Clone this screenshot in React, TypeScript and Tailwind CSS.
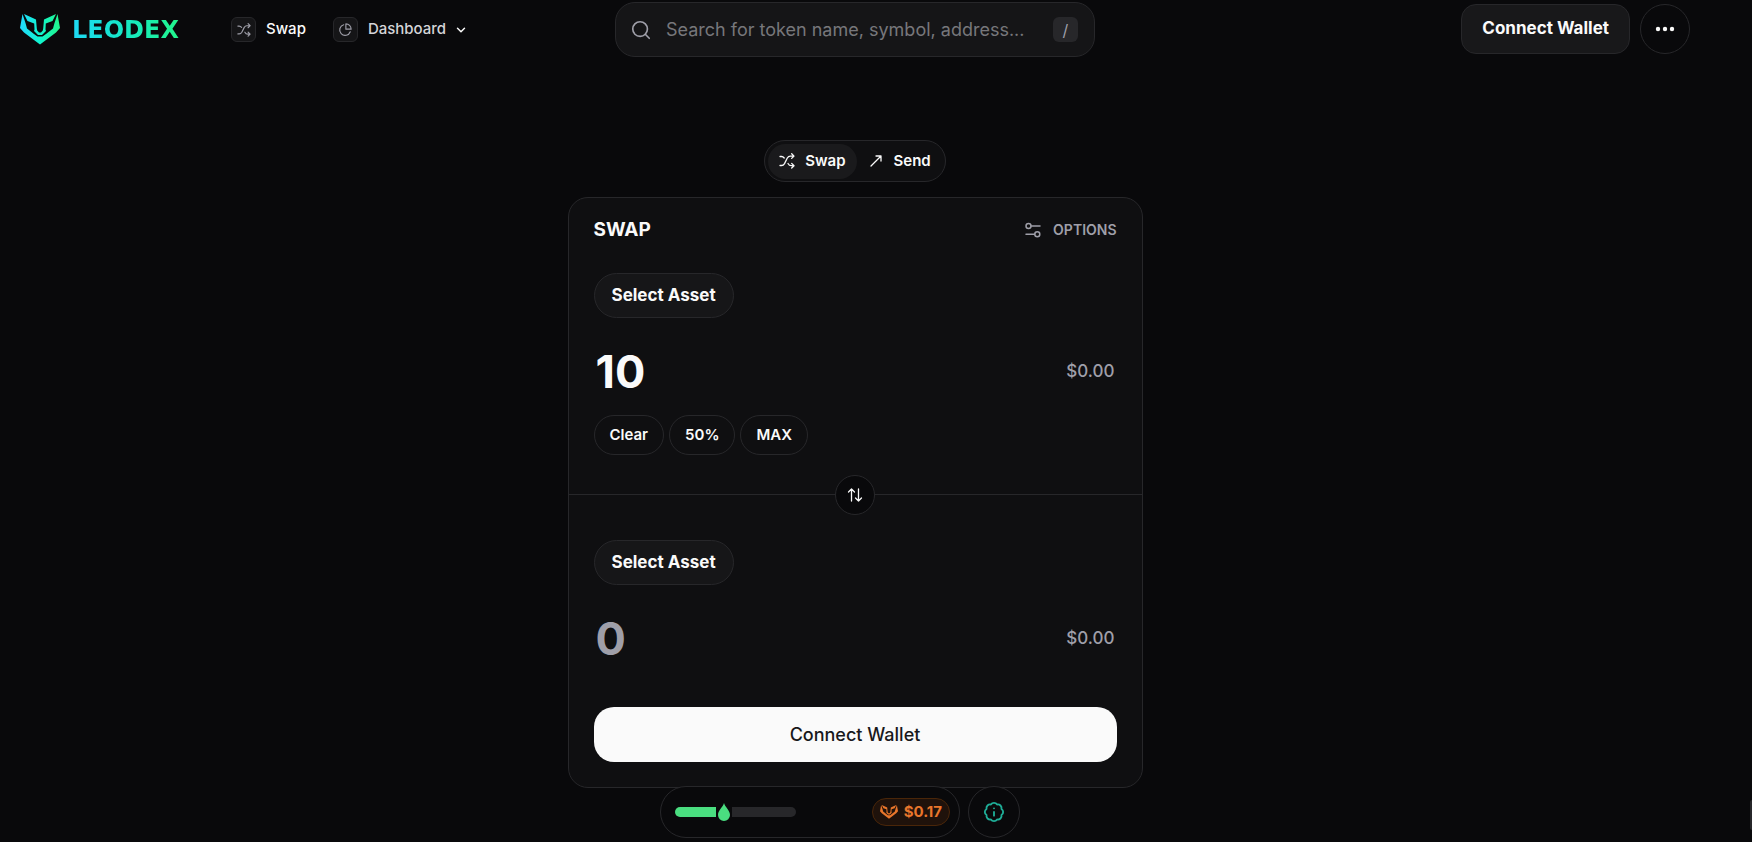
import { useState } from "react";
import type { ReactNode } from "react";
import { BadgeInfo, ChevronDown, Search } from "lucide-react";

const LionIcon = ({ className, fill }: { className?: string; fill: string }) => (
  <svg viewBox="0 0 40 31" className={className} fill={fill} aria-hidden="true">
    <defs>
      <linearGradient id="lion" gradientUnits="userSpaceOnUse" x1="0" y1="0" x2="40" y2="0">
        <stop offset="0" stopColor="#22d8ff" />
        <stop offset="0.5" stopColor="#10f5cf" />
        <stop offset="1" stopColor="#22f58a" />
      </linearGradient>
    </defs>
    <path d="M2.500 0 5.500 9 7 14.500 14 20 17.500 22.500H22.500L26 20 33 14.500 34.500 9 37.500 0 40 14 36 18.500 20 30.500 4 18.500 0 14Z" />
    <path d="M4 0 16 5.500 16.800 14.500 17.200 16.500 19 18.500H21L22.800 16.500 23.200 14.500 24 5.500 36 0 32.500 7 25.800 9.500 25.500 15.500 26 17 22 21H18L14 17 14.500 15.500 14.200 9.500 7.500 7Z" />
  </svg>
);

const ShuffleIcon = ({ className }: { className?: string }) => (
  <svg
    viewBox="0 0 16 16"
    className={className}
    fill="none"
    stroke="currentColor"
    strokeWidth="1.300"
    strokeLinecap="round"
    strokeLinejoin="round"
    aria-hidden="true"
  >
    <path d="M1 3.500h1.500c1.200 0 2 .6 2.700 1.500M1 12.500h1.500c1.400 0 2.300-.7 3-1.900l2.800-5.600c.7-1.200 1.600-1.900 3-1.900H15M9 10.500c.8 1.500 1.700 2.200 3.300 2.200H15M12.700.8 15 3.100l-2.300 2.300M12.700 10.400l2.300 2.300-2.300 2.300" />
  </svg>
);

const PieIcon = () => (
  <svg viewBox="0 0 16 16" className="size-3.5" fill="none" stroke="currentColor" strokeWidth="1.300" strokeLinejoin="round" aria-hidden="true">
    <path d="M6.500 2A6.200 6.200 0 1 0 14 10" strokeLinecap="round" />
    <path d="M9 1v6h6a6 6 0 0 0-6-6Z" />
  </svg>
);

const SendIcon = () => (
  <svg viewBox="0 0 16 16" className="size-4" fill="none" stroke="currentColor" strokeWidth="1.300" strokeLinecap="round" strokeLinejoin="round" aria-hidden="true">
    <path d="M3 13 13 3M8 3h5v5" />
  </svg>
);

const OptionsIcon = () => (
  <svg viewBox="0 0 16 16" className="size-4" fill="none" stroke="currentColor" strokeWidth="1.500" strokeLinecap="round" aria-hidden="true">
    <circle cx="3.500" cy="4" r="2.500" />
    <path d="M6.500 4H15M1 12.200h8.500" />
    <circle cx="12.300" cy="12.200" r="2.500" />
  </svg>
);

const FlipIcon = () => (
  <svg viewBox="0 0 16 16" className="size-4" fill="none" stroke="currentColor" strokeWidth="1.300" strokeLinecap="round" strokeLinejoin="round" aria-hidden="true">
    <path d="M4.500 14V2M1.500 5l3-3 3 3M11.500 2v12M8.500 11l3 3 3-3" />
  </svg>
);

const NavIcon = ({ children }: { children: ReactNode }) => (
  <span className="flex size-[25px] items-center justify-center rounded-md border border-zinc-800 bg-[#151517] text-zinc-400">
    {children}
  </span>
);

const Header = () => {
  const [query, setQuery] = useState("");

  return (
    <header className="grid grid-cols-[1fr_480px_1fr] items-center px-5 pt-0.5">
      <div className="flex items-center">
        <a href="#" className="flex w-[211px] items-center gap-3">
          <LionIcon className="h-[31px] w-10" fill="url(#lion)" />
          <span className="bg-gradient-to-r from-[#1fd9f5] to-[#22f58a] bg-clip-text font-['DejaVu_Sans',sans-serif] text-2xl leading-7 font-bold text-transparent">
            LEODEX
          </span>
        </a>
        <nav className="flex items-center gap-[27px] text-[15px] font-medium">
          <a href="#swap" className="flex items-center gap-2.5 text-zinc-50">
            <NavIcon>
              <ShuffleIcon className="size-3.5" />
            </NavIcon>
            Swap
          </a>
          <button className="flex items-center gap-2 text-zinc-300">
            <span className="flex items-center gap-2.5">
              <NavIcon>
                <PieIcon />
              </NavIcon>
              Dashboard
            </span>
            <ChevronDown className="size-3.5 text-zinc-50" strokeWidth={2.500} />
          </button>
        </nav>
      </div>
      <label className="flex h-[55px] items-center rounded-[20px] border border-zinc-800 bg-[#151517] pr-4 pl-[14px] text-zinc-400">
        <Search className="size-[22px] shrink-0" strokeWidth={1.800} />
        <input
          type="text"
          value={query}
          onChange={(e) => setQuery(e.target.value)}
          aria-label="Search"
          placeholder="Search for token name, symbol, address..."
          className="ml-3.5 min-w-0 flex-1 bg-transparent text-lg outline-none placeholder:text-[#77777b]"
        />
        <kbd className="flex size-[25px] items-center justify-center rounded-md bg-zinc-800 font-[Inter,sans-serif] text-base text-zinc-400">/</kbd>
      </label>
      <div className="flex items-center justify-end gap-2.5 pb-0.5">
        <button className="h-[50px] rounded-[15px] border border-zinc-800 bg-[#18181a] px-5 text-[17px] font-bold text-zinc-50">
          Connect Wallet
        </button>
        <button aria-label="More" className="flex size-[50px] items-center justify-center rounded-full border border-zinc-800">
          <svg viewBox="0 0 20 6" className="h-1.5 w-5" fill="#fafafa" aria-hidden="true">
            <circle cx="3" cy="3" r="2.200" />
            <circle cx="10" cy="3" r="2.200" />
            <circle cx="17" cy="3" r="2.200" />
          </svg>
        </button>
      </div>
    </header>
  );
};

const SelectAsset = () => (
  <button className="h-[45px] rounded-full border border-zinc-800 bg-[#161618] px-[17px] text-[17px] font-bold text-zinc-50">
    Select Asset
  </button>
);

const AmountRow = ({
  label,
  value,
  onChange,
}: {
  label: string;
  value: string;
  onChange?: (value: string) => void;
}) => (
  <div className="mt-[29px] flex h-[50px] items-center justify-between px-0.5">
    <input
      type="text"
      inputMode="decimal"
      aria-label={label}
      placeholder="0"
      value={value}
      readOnly={!onChange}
      onChange={(e) => onChange?.(e.target.value)}
      className="min-w-0 flex-1 bg-transparent text-[45px] leading-[50px] font-bold text-zinc-50 outline-none placeholder:text-zinc-400"
    />
    <span className="text-[17px] font-medium text-zinc-400">$0.00</span>
  </div>
);

const SwapCard = () => {
  const [amount, setAmount] = useState("10");

  const shortcuts = [
    { label: "Clear", action: () => setAmount("") },
    { label: "50%", action: () => setAmount(String(Number(amount) / 2)) },
    { label: "MAX", action: () => {} },
  ];

  return (
    <section className="w-full max-w-[575px] rounded-[20px] border border-zinc-800 bg-[#0f0f11]">
      <div className="px-[25px] pt-5 pb-[39px]">
        <div className="mb-[31px] flex h-6 items-center justify-between">
          <h1 className="text-[19px] font-bold text-zinc-50">SWAP</h1>
          <button className="flex items-center gap-3 text-sm font-semibold text-zinc-400">
            <OptionsIcon />
            OPTIONS
          </button>
        </div>
        <SelectAsset />
        <AmountRow label="You pay" value={amount} onChange={setAmount} />
        <div className="mt-[18px] flex gap-[5px]">
          {shortcuts.map((item) => (
            <button
              key={item.label}
              onClick={item.action}
              className="h-10 rounded-full border border-zinc-800 px-[15px] text-[15px] font-semibold text-zinc-50"
            >
              {item.label}
            </button>
          ))}
        </div>
      </div>
      <div className="flex h-px items-center bg-zinc-800">
        <button
          aria-label="Flip assets"
          className="mx-auto flex size-10 shrink-0 items-center justify-center rounded-full border border-zinc-800 bg-[#09090b] text-zinc-50"
        >
          <FlipIcon />
        </button>
      </div>
      <div className="px-[25px] pt-[45px] pb-[25px]">
        <SelectAsset />
        <AmountRow label="You receive" value="" />
        <button className="mt-[43px] h-[55px] w-full rounded-[20px] bg-zinc-50 text-lg font-medium text-zinc-900">
          Connect Wallet
        </button>
      </div>
    </section>
  );
};

const StatusBar = () => (
  <footer className="relative -mt-0.5 flex justify-center gap-2 pr-[30px]">
    <div className="flex h-[52px] w-[300px] items-center justify-between rounded-full border border-zinc-800 bg-[#09090b] pr-[9px] pl-[14px]">
      <div role="meter" aria-label="Resources" aria-valuenow={36} className="flex w-[121px] items-center">
        <div className="h-2.5 flex-1 rounded-l-full bg-[#4ade80]" />
        <svg viewBox="0 0 12 18" className="mx-0.5 h-[18px] w-3" fill="#4ade80" aria-hidden="true">
          <path d="M6 0C7 4 12 7.500 12 12a6 6 0 0 1-12 0C0 7.500 5 4 6 0Z" />
        </svg>
        <div className="h-2.5 w-16 rounded-r-full bg-zinc-800" />
      </div>
      <div className="flex h-7 items-center gap-1.5 rounded-full border border-[#4a2609] bg-[#1f120b] px-[7px] text-[15px] font-bold text-[#e8762b]">
        <LionIcon className="h-3.5 w-[18px]" fill="currentColor" />
        $0.17
      </div>
    </div>
    <button aria-label="Info" className="flex size-[52px] items-center justify-center rounded-full border border-zinc-800 bg-[#09090b] text-[#1fae98]">
      <BadgeInfo className="size-[22px]" />
    </button>
  </footer>
);

const App = () => {
  const [tab, setTab] = useState("Swap");

  const tabs = [
    { name: "Swap", icon: <ShuffleIcon className="size-4" /> },
    { name: "Send", icon: <SendIcon /> },
  ];

  return (
    <div className="relative min-h-screen bg-[#09090b] pr-[42px] font-[Inter,sans-serif] text-zinc-50">
      <Header />
      <main className="mt-[83px] flex flex-col items-center">
        <div className="mb-[15px] flex h-[42px] items-center rounded-full border border-zinc-800 bg-[#0f0f11] px-[3px]">
          {tabs.map((item) => (
            <button
              key={item.name}
              onClick={() => setTab(item.name)}
              className={`flex h-[35px] items-center gap-2.5 rounded-full px-[11px] text-[15px] font-semibold ${
                tab === item.name ? "bg-[#1a1a1c]" : ""
              }`}
            >
              {item.icon}
              {item.name}
            </button>
          ))}
        </div>
        <SwapCard />
      </main>
      <StatusBar />
      <div className="absolute right-0 bottom-3 h-[30px] w-0.5 rounded-l bg-zinc-800" />
    </div>
  );
};

export default App;
